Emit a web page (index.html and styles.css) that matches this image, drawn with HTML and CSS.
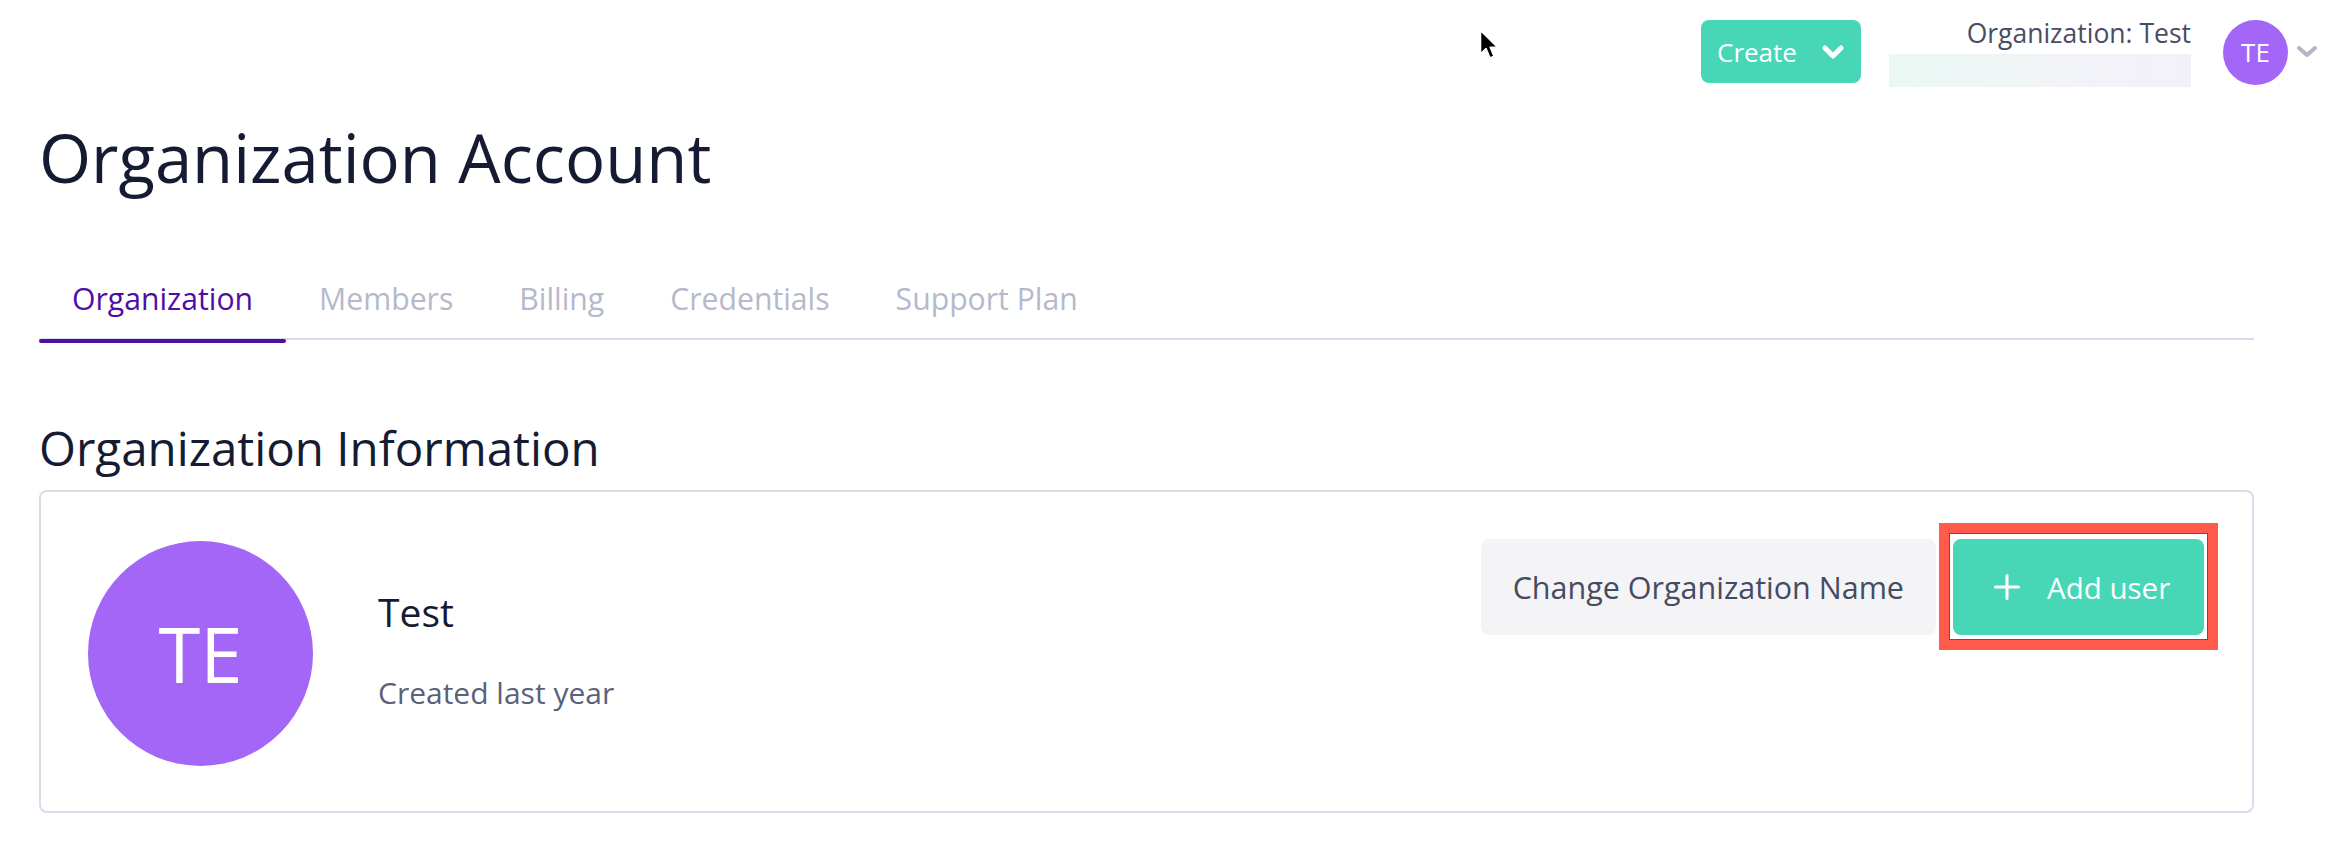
FILE: index.html
```html
<!DOCTYPE html>
<html lang="en">
<head>
<meta charset="utf-8">
<title>Organization Account</title>
<link rel="stylesheet" href="styles.css">
</head>
<body>
<header class="topbar">
  <button class="create-btn">
    <span class="create-label">Create</span>
    <svg class="create-chevron" width="22" height="14" viewBox="0 0 22 14"><polyline points="3,3 11,11 19,3" fill="none" stroke="#fff" stroke-width="5" stroke-linecap="round" stroke-linejoin="round"/></svg>
  </button>
  <div class="org-switch">
    <div class="org-name">Organization: Test</div>
    <div class="org-skeleton"></div>
  </div>
  <div class="user-avatar">TE</div>
  <svg class="user-chevron" width="22" height="14" viewBox="0 0 22 14"><polyline points="3,3 11,10 19,3" fill="none" stroke="#b3b5c7" stroke-width="4" stroke-linecap="round" stroke-linejoin="round"/></svg>
</header>

<main class="page">
  <h1 class="page-title">Organization Account</h1>

  <nav class="tabs">
    <div class="tab active">Organization</div>
    <div class="tab">Members</div>
    <div class="tab">Billing</div>
    <div class="tab">Credentials</div>
    <div class="tab">Support Plan</div>
  </nav>

  <h2 class="section-title">Organization Information</h2>

  <section class="card">
    <div class="org-summary">
      <div class="org-avatar">TE</div>
      <div class="org-text">
        <div class="org-title">Test</div>
        <div class="org-created">Created last year</div>
      </div>
    </div>
    <div class="actions">
      <button class="btn-secondary">Change Organization Name</button>
      <button class="btn-primary highlighted">
        <svg class="plus" width="26" height="26" viewBox="0 0 26 26"><path d="M13 1.5V24.5M1.5 13H24.5" stroke="#fff" stroke-width="3" stroke-linecap="round"/></svg>
        <span>Add user</span>
      </button>
    </div>
  </section>
</main>

<svg class="cursor" width="22" height="34" viewBox="0 0 22 34">
  <path d="M1.5 1.5 L1.5 25 L7 19.5 L11 29 L15 27.3 L11.2 18.2 L18.5 18.2 Z" fill="#000" stroke="#fff" stroke-width="1.6" stroke-linejoin="round"/>
</svg>
</body>
</html>
```
FILE: styles.css
```css
* { box-sizing: border-box; }
html, body { margin: 0; padding: 0; background: #fff; }
body {
  font-family: "Open Sans", "Noto Sans", sans-serif;
  color: #151b32;
  width: 2330px;
  height: 850px;
  overflow: hidden;
  position: relative;
}
button { font-family: inherit; border: 0; cursor: pointer; }

/* ---------- top bar ---------- */
.topbar {
  height: 104px;
  display: flex;
  align-items: center;
  justify-content: flex-end;
  padding-right: 12px;
}
.create-btn {
  height: 63px;
  width: 160px;
  margin-top: -1px;
  background: #47d7b7;
  border-radius: 8px;
  display: flex;
  align-items: center;
  justify-content: space-between;
  padding: 0 17px 0 16px;
  color: #fff;
  margin-right: 28px;
}
.create-label { font-size: 26px; line-height: 30px; }
.create-chevron { display: block; }
.org-switch {
  display: flex;
  flex-direction: column;
  align-items: flex-end;
  margin-right: 32px;
}
.org-name {
  font-size: 26.5px;
  line-height: 30px;
  color: #474d63;
}
.org-skeleton {
  margin-top: 6px;
  width: 302px;
  height: 33px;
  background: linear-gradient(90deg, #e9f8f3 0%, #f1f4f6 50%, #f3f0fa 100%);
}
.user-avatar {
  width: 65px;
  height: 65px;
  border-radius: 50%;
  background: #a366f6;
  color: #fff;
  font-size: 26px;
  display: flex;
  align-items: center;
  justify-content: center;
}
.user-chevron { margin-left: 8px; display: block; }

/* ---------- page ---------- */
.page { padding: 0 76px 0 39px; }
.page-title {
  margin: 13px 0 0;
  font-size: 67px;
  line-height: 80px;
  font-weight: 400;
  color: #151b32;
}

.tabs {
  margin-top: 82px;
  display: flex;
  border-bottom: 2px solid #d8dbe9;
}
.tab {
  position: relative;
  padding: 0 33px 19px;
  font-size: 30.2px;
  line-height: 40px;
  color: #b5b9cb;
}
.tab.active { color: #4f0ea3; }
.tab.active::after {
  content: "";
  position: absolute;
  left: 0;
  right: 0;
  bottom: -5px;
  height: 4px;
  border-radius: 2px;
  background: #4f0ea3;
}

.section-title {
  margin: 80px 0 0;
  font-size: 47.5px;
  line-height: 56px;
  font-weight: 400;
  color: #151b32;
}

.card {
  margin-top: 14px;
  border: 2px solid #d9dce9;
  border-radius: 8px;
  padding: 47px 48px 45px 47px;
  display: flex;
  align-items: flex-start;
  justify-content: space-between;
}
.org-summary {
  display: flex;
  align-items: flex-start;
  gap: 65px;
  margin-top: 2px;
}
.org-avatar {
  width: 225px;
  height: 225px;
  border-radius: 50%;
  background: #a366f6;
  color: #fff;
  font-size: 76px;
  display: flex;
  align-items: center;
  justify-content: center;
}
.org-text { margin-top: 47px; }
.org-title {
  font-size: 39px;
  line-height: 48px;
  color: #151b32;
}
.org-created {
  margin-top: 37px;
  font-size: 30px;
  line-height: 40px;
  color: #5b6179;
}

.actions {
  display: flex;
  gap: 17px;
}
.btn-secondary {
  height: 96px;
  padding: 0 32px;
  background: #f4f4f7;
  border-radius: 8px;
  font-size: 30.5px;
  color: #454b60;
  display: flex;
  align-items: center;
}
.btn-primary {
  position: relative;
  height: 96px;
  width: 251px;
  padding: 0 0 0 41px;
  background: #47d7b7;
  border-radius: 8px;
  font-size: 29.5px;
  color: #fff;
  display: flex;
  align-items: center;
  gap: 27px;
}
.btn-primary .plus { display: block; flex: none; }
.highlighted::after {
  content: "";
  position: absolute;
  top: -16px;
  left: -14px;
  right: -14px;
  bottom: -15px;
  border: 10px solid #ff5a4c;
  box-shadow: inset 0 0 0 1px #7b3a98;
  pointer-events: none;
}

.cursor {
  position: absolute;
  left: 1479px;
  top: 29px;
}
```
